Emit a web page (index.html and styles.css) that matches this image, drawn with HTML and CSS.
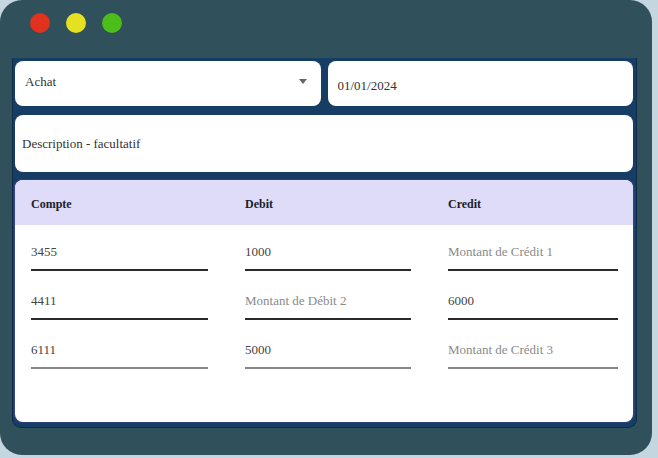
FILE: index.html
```html
<!DOCTYPE html>
<html lang="fr">
<head>
    <meta charset="UTF-8">
    <meta name="viewport" content="width=device-width, initial-scale=1.0">
    <title>Saisie comptable</title>
    <link rel="stylesheet" href="styles.css">
</head>
<body>
    <div class="device">
        <div class="titlebar">
            <span class="dot red"></span>
            <span class="dot yellow"></span>
            <span class="dot green"></span>
        </div>
        <div class="panel">
            <div class="top-row">
                <div class="field select-wrap">
                    <select id="type">
                        <option>Achat</option>
                        <option>Vente</option>
                    </select>
                </div>
                <div class="field">
                    <input type="text" id="date" value="01/01/2024">
                </div>
            </div>
            <div class="field desc">
                <input type="text" id="description" placeholder="Description - facultatif">
            </div>
            <div class="card">
                <div class="grid head">
                    <span>Compte</span>
                    <span>Debit</span>
                    <span>Credit</span>
                </div>
                <div class="rows">
                    <div class="grid row">
                        <input type="text" value="3455">
                        <input type="text" value="1000">
                        <input type="text" placeholder="Montant de Crédit 1">
                    </div>
                    <div class="grid row">
                        <input type="text" value="4411">
                        <input type="text" placeholder="Montant de Débit 2">
                        <input type="text" value="6000">
                    </div>
                    <div class="grid row light">
                        <input type="text" value="6111">
                        <input type="text" value="5000">
                        <input type="text" placeholder="Montant de Crédit 3">
                    </div>
                </div>
            </div>
        </div>
    </div>
</body>
</html>
```

FILE: styles.css
```css
body{
    margin: 0;
    background-color: #c4d6df;
    font-family: "Liberation Serif", "DejaVu Serif", serif;
}
.device{
    width: 652px;
    height: 455px;
    background-color: #30505b;
    border-radius: 22px;
    box-sizing: border-box;
    padding: 0 15px 0 12px;
}
.titlebar{
    height: 58px;
    display: flex;
    align-items: center;
    gap: 16px;
    padding-left: 18px;
    padding-bottom: 12px;
    box-sizing: border-box;
}
.dot{
    width: 20px;
    height: 20px;
    border-radius: 50%;
}
.red{
    background-color: #e1321d;
}
.yellow{
    background-color: #e5e122;
}
.green{
    background-color: #4dbd19;
}
.panel{
    background-color: #163e64;
    border: 1px solid #0e2b48;
    border-top: none;
    border-radius: 0 0 9px 9px;
    padding: 3px 3px 5px 2px;
    display: flex;
    flex-direction: column;
    gap: 9px;
}
.top-row{
    display: flex;
    gap: 7px;
}
.field{
    flex: 1;
    height: 45px;
    background-color: #fff;
    border-radius: 8px;
    position: relative;
}
.field select,
.field input{
    width: 100%;
    height: 100%;
    box-sizing: border-box;
    border: none;
    background: transparent;
    font-family: inherit;
    font-size: 13px;
    color: #333;
    outline: none;
    appearance: none;
}
.field select{
    padding: 0 10px 4px;
}
.field input{
    padding: 4px 10px 0;
}
.select-wrap::after{
    content: "";
    position: absolute;
    right: 14px;
    top: 18px;
    border-left: 4px solid transparent;
    border-right: 4px solid transparent;
    border-top: 5px solid #666;
}
.desc{
    flex: none;
    height: 57px;
    margin-bottom: -1px;
}
.desc input{
    padding: 0 7px;
}
.desc input::placeholder{
    color: #333;
}
.card{
    background-color: #fff;
    border-radius: 8px;
    height: 242px;
    overflow: hidden;
    box-shadow: 1px 0 2px rgba(150, 90, 220, 0.35), -1px 0 2px rgba(150, 90, 220, 0.35);
}
.grid{
    display: grid;
    grid-template-columns: 177px 166px 170px;
    column-gap: 37px;
    padding-left: 16px;
}
.head{
    height: 45px;
    box-sizing: border-box;
    padding-top: 3px;
    align-items: center;
    background-color: #dedcf9;
    font-size: 12px;
    font-weight: bold;
    color: #1c1c2a;
}
.rows{
    padding-top: 16px;
    display: flex;
    flex-direction: column;
    gap: 19px;
}
.row input{
    height: 30px;
    box-sizing: border-box;
    padding: 0 0 7px;
    border: none;
    border-bottom: 2px solid #2b2b2b;
    font-family: inherit;
    font-size: 13px;
    color: #444;
    outline: none;
    min-width: 0;
}
.row input::placeholder{
    color: #8a8a8a;
}
.light input{
    border-bottom-color: #858585;
}
```
